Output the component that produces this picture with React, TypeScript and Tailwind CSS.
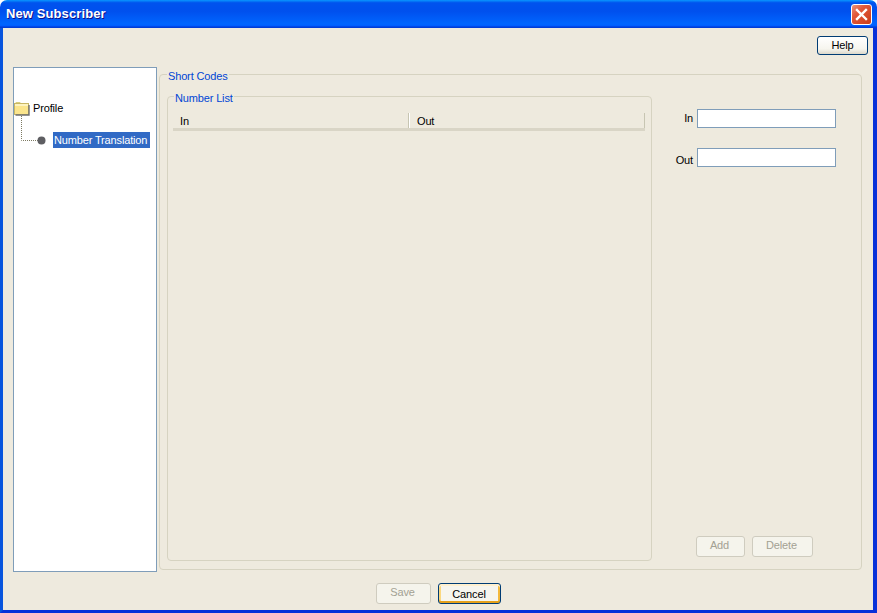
const uiFont = "font-['Liberation_Sans',Arial,sans-serif] text-[11px] leading-[14px] tracking-[-0.15px]";

function FolderIcon() {
  return (
    <svg width="17" height="15" viewBox="0 0 17 15" className="shrink-0">
      <path d="M1 2.5 L2 1 H6 L7 2.5 Z" fill="#d9cf7e" />
      <rect x="0.5" y="2.5" width="14" height="11" fill="#fbe58c" stroke="#c9b765" />
      <rect x="1" y="3" width="13" height="2" fill="#fdf3c0" />
      <path d="M15 4 V14 H1.5" fill="none" stroke="#6f6f6f" strokeWidth="1.4" />
    </svg>
  );
}

function TreeConnector() {
  return (
    <svg width="33" height="41" viewBox="0 0 33 41" className="shrink-0">
      <path d="M7.5 0 V24.5 H24" fill="none" stroke="#7d7a62" strokeDasharray="1 1" />
      <circle cx="27.5" cy="24.5" r="4" fill="#5e5e62" />
    </svg>
  );
}

function CloseButton() {
  return (
    <button className="w-[21px] h-[21px] rounded-[3px] border border-white flex items-center justify-center bg-[linear-gradient(135deg,#e9947c_0%,#e2583a_35%,#c93c1a_100%)]">
      <svg width="13" height="13" viewBox="0 0 13 13">
        <path d="M2 2 L11 11 M11 2 L2 11" stroke="#fff" strokeWidth="2.4" strokeLinecap="square" />
      </svg>
    </button>
  );
}

function XpButton({ label, className }: { label: string; className: string }) {
  return (
    <button className={`h-[19px] pb-[1px] rounded-[3px] border border-[#003c74] bg-[linear-gradient(180deg,#ffffff_0%,#f6f5ee_70%,#dcd8ca_100%)] text-black ${className}`}>
      {label}
    </button>
  );
}

function DisabledButton({ label, className }: { label: string; className: string }) {
  return (
    <button disabled className={`h-[21px] pb-[4px] pr-[2px] rounded-[3px] border border-[#cfccbf] bg-[#f5f4ec] text-[#a3a193] ${className}`}>
      {label}
    </button>
  );
}

function Field({ label, className, labelClass }: { label: string; className: string; labelClass: string }) {
  return (
    <div className={`flex items-center justify-end ${className}`}>
      <span className={`mr-[4px] text-black ${labelClass}`}>{label}</span>
      <input className="w-[139px] h-[19px] bg-white border border-[#7f9db9] outline-none" />
    </div>
  );
}

export default function App() {
  return (
    <div className={`w-[877px] h-[613px] flex flex-col overflow-hidden bg-white ${uiFont}`}>
      <div className="h-[28px] shrink-0 pl-[6px] pr-[5px] rounded-t-[7px] flex items-center justify-between bg-[linear-gradient(180deg,#0997ff_0%,#0053ee_10%,#0050ee_40%,#0066ff_86%,#005bff_93%,#003dd7_96%,#003dd7_100%)]">
        <span className="text-white font-bold text-[13px] tracking-[0.1px] [text-shadow:1px_1px_0_#0f1089]">New Subscriber</span>
        <CloseButton />
      </div>

      <div className="flex-1 min-h-0 flex flex-col bg-[#eeeade] border-l-[3px] border-r-[4px] border-b-[3px] border-l-[#0855dd] border-r-[#0831d9] border-b-[#0831d9]">
        <div className="h-[39px] shrink-0 pt-[8px] pr-[5px] flex justify-end">
          <XpButton label="Help" className="w-[51px]" />
        </div>

        <div className="h-[505px] shrink-0 pl-[10px] flex gap-[2px] items-start">
          <div className="w-[144px] h-[505px] shrink-0 bg-white border border-[#7f9db9] pt-[32px]">
            <div className="flex items-center h-[16px] gap-[2px] text-black">
              <FolderIcon />
              <span>Profile</span>
            </div>
            <div className="flex items-start">
              <TreeConnector />
              <span className="ml-[6px] mt-[16px] h-[16px] w-[97px] pl-[1px] flex items-center bg-[#316ac5] text-white">Number Translation</span>
            </div>
          </div>

          <fieldset className="-mt-[2px] w-[703px] h-[505px] border border-[#d6d3c1] rounded-[4px] pl-[7px] pb-[8px] pt-[4px] flex">
            <legend className="ml-[0px] pt-[4px] px-[1px] text-[#0046d5]">Short Codes</legend>
            <div className="flex w-full h-full">
              <fieldset className="w-[485px] h-[474px] border border-[#d6d3c1] rounded-[4px] pl-[5px] pr-[6px]">
                <legend className="ml-[1px] pt-[4px] px-[1px] text-[#0046d5]">Number List</legend>
                <div className="mt-[8px] h-[18px] flex border-b-[3px] border-b-[#d9d5c6] text-black">
                  <div className="w-[236px] pl-[7px] pt-[1px] border-r border-r-[#c7c5b2]">In</div>
                  <div className="flex-1 pl-[7px] pt-[1px] border-l border-l-white border-r border-r-[#c7c5b2]">Out</div>
                </div>
              </fieldset>

              <div className="flex-1 flex flex-col pr-[25px]">
                <Field label="In" className="mt-[22px]" labelClass="mb-[2px]" />
                <Field label="Out" className="mt-[20px]" labelClass="mt-[5px]" />
                <div className="mt-auto mb-[4px] ml-[44px] flex gap-[7px]">
                  <DisabledButton label="Add" className="w-[49px]" />
                  <DisabledButton label="Delete" className="w-[61px]" />
                </div>
              </div>
            </div>
          </fieldset>
        </div>

        <div className="flex-1 flex justify-center items-start gap-[7px] pt-[11px] pl-[1px]">
          <DisabledButton label="Save" className="w-[55px]" />
          <button className="w-[63px] h-[21px] pr-[1px] rounded-[3px] border border-[#003c74] bg-[#f6f5ee] shadow-[inset_0_2px_0_#fff0cf,inset_0_-2px_0_#e5a01b,inset_2px_0_0_#fbd87f,inset_-2px_0_0_#f4b93c] text-black">Cancel</button>
        </div>
      </div>
    </div>
  );
}
